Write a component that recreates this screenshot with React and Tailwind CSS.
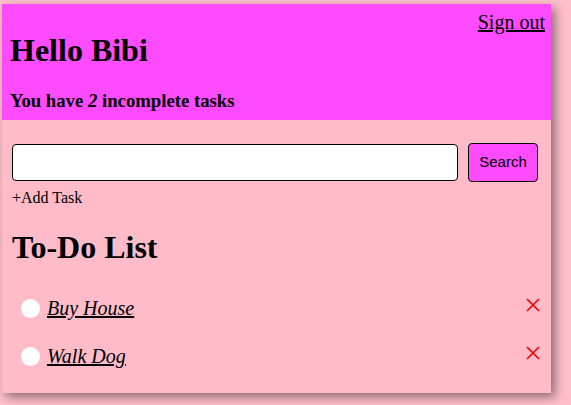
import React from 'react';

const tasks = ['Buy House', 'Walk Dog'];

export default function App() {
  return (
    <div className="min-h-[405px] bg-[#ffc0cb] pt-[4px] pl-[2px] font-['Liberation_Serif',serif] text-black">
      <div className="w-[549px] bg-[#ffbcc8] shadow-[4px_4px_10px_rgba(0,0,0,0.45)]">
        {/* Header */}
        <div className="relative h-[116px] bg-[#ff4bff] px-[8px]">
          <a href="#" className="absolute right-[6px] top-[6px] text-[20px] leading-[24px] underline">Sign out</a>
          <h1 className="pt-[28px] text-[32px] font-bold leading-[37px]">Hello Bibi</h1>
          <p className="mt-[21px] text-[18.72px] font-bold leading-[22px]">
            You have <em>2</em> incomplete tasks
          </p>
        </div>

        {/* Body */}
        <div className="px-[10px] pt-[23px] pb-[24px]">
          <div className="flex items-center gap-[10px]">
            <input type="text" className="h-[37px] w-[446px] rounded-[4px] border border-black bg-white" />
            <button className="h-[39px] w-[70px] rounded-[4px] border border-black bg-[#ff4bff] font-['Liberation_Sans',sans-serif] text-[15px]">Search</button>
          </div>
          <div className="mt-[7px] text-[16px] leading-[18px]">+Add Task</div>
          <h2 className="mt-[22px] text-[32px] font-bold leading-[37px]">To-Do List</h2>
          <ul className="mt-[30px] flex flex-col gap-[23px] pl-[9px]">
            {tasks.map((t) => (
              <li key={t} className="flex h-[25px] items-start justify-between">
                <div className="flex items-center gap-[7px]">
                  <span className="h-[19px] w-[19px] rounded-full bg-white" />
                  <a href="#" className="text-[20px] italic leading-[24px] underline">{t}</a>
                </div>
                <svg width="14" height="14" viewBox="0 0 14 14" className="mt-[2px] mr-[1px]">
                  <path d="M1 1L13 13M13 1L1 13" stroke="#ff0000" strokeWidth="1.7" />
                </svg>
              </li>
            ))}
          </ul>
        </div>
      </div>
    </div>
  );
}
